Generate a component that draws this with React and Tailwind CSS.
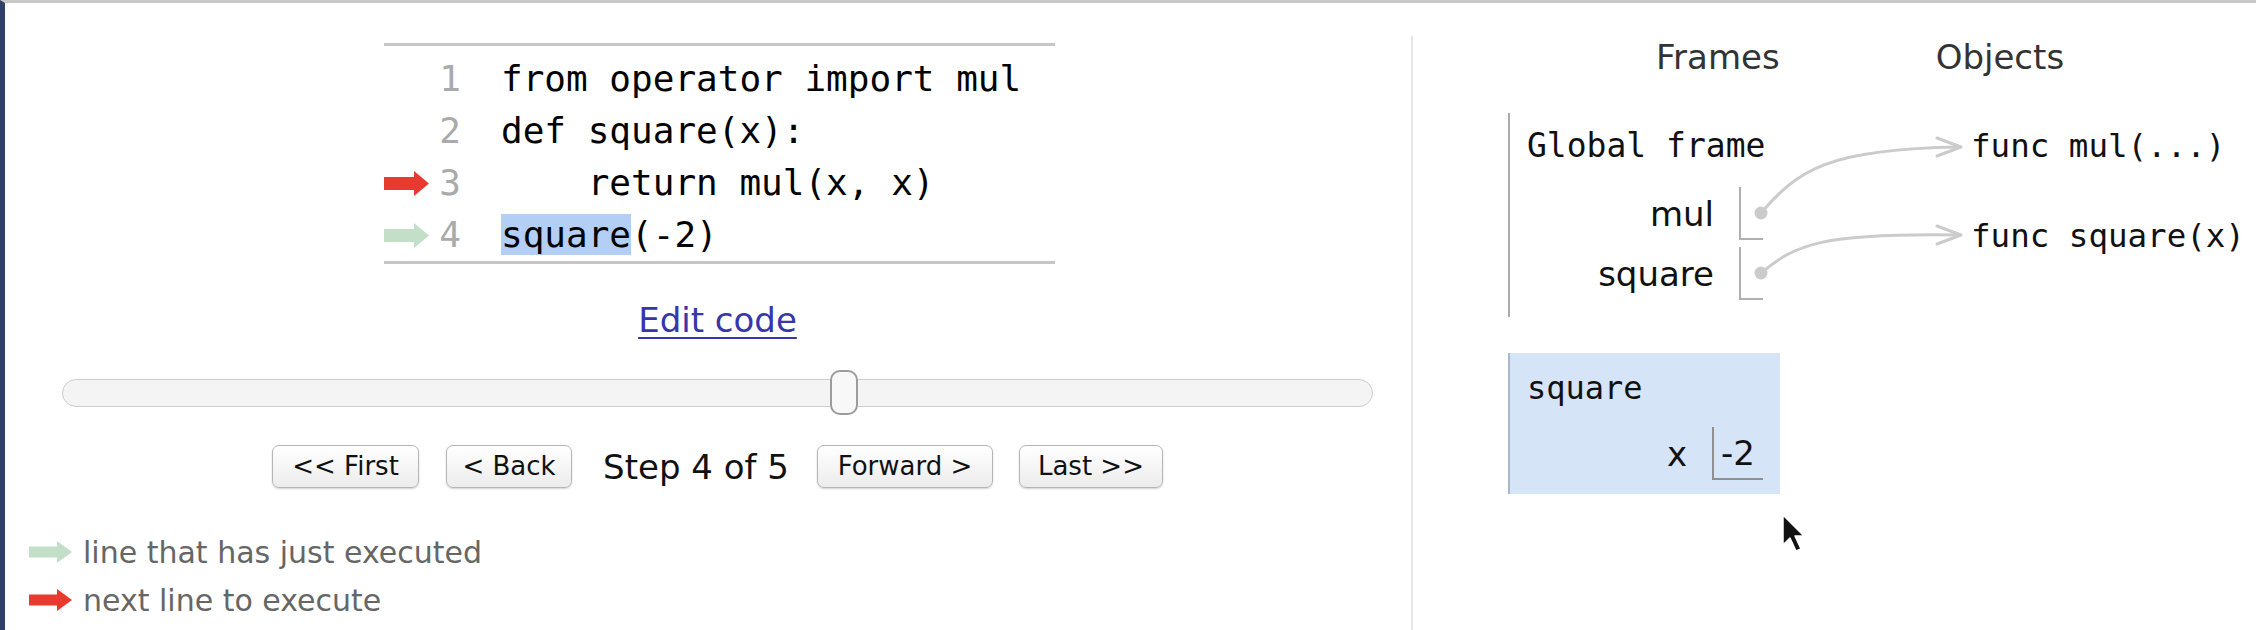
import React from 'react';

const SANS = "font-['DejaVu_Sans',sans-serif]";
const MONO = "font-['DejaVu_Sans_Mono',monospace]";

const LineArrow = ({ color, w = 45, h = 25 }) => {
  const head = Math.round(w * 0.34);
  const shaft = Math.round(h * 0.5);
  return (
    <svg width={w} height={h} viewBox={`0 0 ${w} ${h}`}>
      <rect x="0" y={(h - shaft) / 2} width={w - head + 1} height={shaft} fill={color} />
      <polygon points={`${w - head},0 ${w},${h / 2} ${w - head},${h}`} fill={color} />
    </svg>
  );
};

const code = [
  { n: 1, text: 'from operator import mul' },
  { n: 2, text: 'def square(x):' },
  { n: 3, text: '    return mul(x, x)', arrow: '#e83a2f' },
  { n: 4, text: '(-2)', hl: 'square', arrow: '#c3dfc8' },
];

const Btn = ({ w, children }) => (
  <button
    className={`${SANS} h-[43px] ${w} rounded-[7px] border border-[#b5b5b5] bg-linear-to-b from-white to-[#ececec] text-[26px] text-[#111] shadow-[0_1px_2px_rgba(0,0,0,0.18)] flex items-center justify-center whitespace-nowrap`}
  >
    {children}
  </button>
);

const VarRow = ({ name, children, boxW, border }) => (
  <div className="flex justify-end items-center">
    <span className={`${SANS} text-[34px] text-[#111] leading-[40px]`}>{name}</span>
    <div className={`ml-[25px] ${boxW} h-[53px] border-l-2 border-b-2 ${border} flex items-center`}>
      {children}
    </div>
  </div>
);

export default function App() {
  return (
    <div className="relative w-[2256px] h-[630px] bg-white overflow-hidden">
      <div className="flex h-full border-t-[3px] border-t-[#c9c9c9] border-l-[5px] border-l-[#2f4166]">
        {/* left: code + controls */}
        <div className="w-[1406px] flex flex-col">
          <div className="ml-[57px] w-[1311px] flex flex-col items-center">
            <div className={`${MONO} self-start ml-[322px] mt-[40px] w-[671px] border-y-[3px] border-[#c6c6c6] pt-[7px] text-[36px] text-black`}>
              {code.map((l) => (
                <div key={l.n} className="flex leading-[52px]">
                  <span className="w-[45px] flex items-center">
                    {l.arrow && <LineArrow color={l.arrow} />}
                  </span>
                  <span className="w-[32px] text-right text-[#aaa]">{l.n}</span>
                  <span className="pl-[40px] whitespace-pre">
                    {l.hl && <span className="bg-[#b3cff5]">{l.hl}</span>}
                    {l.text}
                  </span>
                </div>
              ))}
            </div>

            <a href="#" className={`${SANS} mt-[36px] text-[34px] leading-[40px] text-[#3636aa] underline decoration-2 underline-offset-[5px]`}>
              Edit code
            </a>

            <div className="relative mt-[30px] w-full h-[45px] flex items-center">
              <div className="w-full h-[28px] rounded-full bg-[#f4f4f4] border-[1.5px] border-[#cdcdcd]" />
              <div className="absolute left-[768px] top-0 w-[28px] h-[45px] rounded-[10px] bg-[#f8f8f8] border-2 border-[#9c9c9c]" />
            </div>

            <div className="mt-[30px] flex items-center h-[43px]">
              <Btn w="w-[147px]">&lt;&lt; First</Btn>
              <div className="ml-[27px]"><Btn w="w-[126px]">&lt; Back</Btn></div>
              <span className={`${SANS} ml-[31px] text-[34px] text-[#111] leading-[40px]`}>Step 4 of 5</span>
              <div className="ml-[28px]"><Btn w="w-[176px]">Forward &gt;</Btn></div>
              <div className="ml-[26px]"><Btn w="w-[144px]">Last &gt;&gt;</Btn></div>
            </div>
          </div>

          <div className={`${SANS} ml-[24px] mt-[40px] text-[30px] text-[#666] flex flex-col`}>
            <div className="flex items-center h-[48px]">
              <LineArrow color="#c3dfc8" w={43} h={22} />
              <span className="ml-[11px]">line that has just executed</span>
            </div>
            <div className="flex items-center h-[48px]">
              <LineArrow color="#e83a2f" w={43} h={22} />
              <span className="ml-[11px]">next line to execute</span>
            </div>
          </div>
        </div>

        {/* right: frames + objects */}
        <div className="flex-1 mt-[33px] border-l-2 border-[#e6e6e6] flex flex-col">
          <div className={`${SANS} pt-[1px] flex text-[34px] leading-[40px] text-[#333]`}>
            <span className="ml-[243px]">Frames</span>
            <span className="ml-[156px]">Objects</span>
          </div>

          <div className="mt-[36px] flex">
            <div className="ml-[95px] w-[272px] shrink-0 flex flex-col">
              <div className="border-l-2 border-[#aaa] pt-[13px] pb-[17px] pr-[17px]">
                <div className={`${MONO} pl-[17px] text-[33px] leading-[40px] text-[#111] whitespace-nowrap`}>Global frame</div>
                <div className="mt-[21px] flex flex-col gap-[7px]">
                  <VarRow name="mul" boxW="w-[24px]" border="border-[#b0b0b0]" />
                  <VarRow name="square" boxW="w-[24px]" border="border-[#b0b0b0]" />
                </div>
              </div>

              <div className="mt-[36px] bg-[#d6e4f7] border-l-2 border-[#a9b8cd] pt-[15px] pb-[14px] pr-[17px]">
                <div className={`${MONO} pl-[17px] text-[32px] leading-[40px] text-[#111]`}>square</div>
                <div className="mt-[19px]">
                  <VarRow name="x" boxW="w-[51px]" border="border-[#8f8f8f]">
                    <span className={`${SANS} pl-[7px] text-[34px] leading-[40px] text-[#111]`}>-2</span>
                  </VarRow>
                </div>
              </div>
            </div>

            <div className={`${MONO} ml-[191px] pt-[13px] flex flex-col text-[32.5px] leading-[40px] text-[#111] whitespace-pre`}>
              <span>func mul(...)</span>
              <span className="mt-[50px]">func square(x)</span>
            </div>
          </div>
        </div>
      </div>

      {/* pointer arrows and mouse cursor drawn over the visualizer */}
      <svg className="absolute top-0 left-0 pointer-events-none" width="2256" height="630" viewBox="0 0 2256 630">
        <g fill="none" stroke="#cbcbcb" strokeWidth="3" strokeLinecap="round" strokeLinejoin="round">
          <path d="M1761 213 C1798 170 1828 149 1959 147" />
          <path d="M1937 138 L1961 147 L1937 156" />
          <path d="M1761 273 C1796 244 1822 233 1959 235" />
          <path d="M1937 226 L1961 235 L1937 244" />
        </g>
        <circle cx="1761" cy="213" r="6.5" fill="#cbcbcb" />
        <circle cx="1761" cy="273" r="6.5" fill="#cbcbcb" />
        <path
          d="M1783 515 L1783 545 L1790 538 L1796 551 L1801 549 L1795 536 L1804 536 Z"
          fill="#111"
          stroke="#fff"
          strokeWidth="1.5"
          strokeLinejoin="round"
        />
      </svg>
    </div>
  );
}
